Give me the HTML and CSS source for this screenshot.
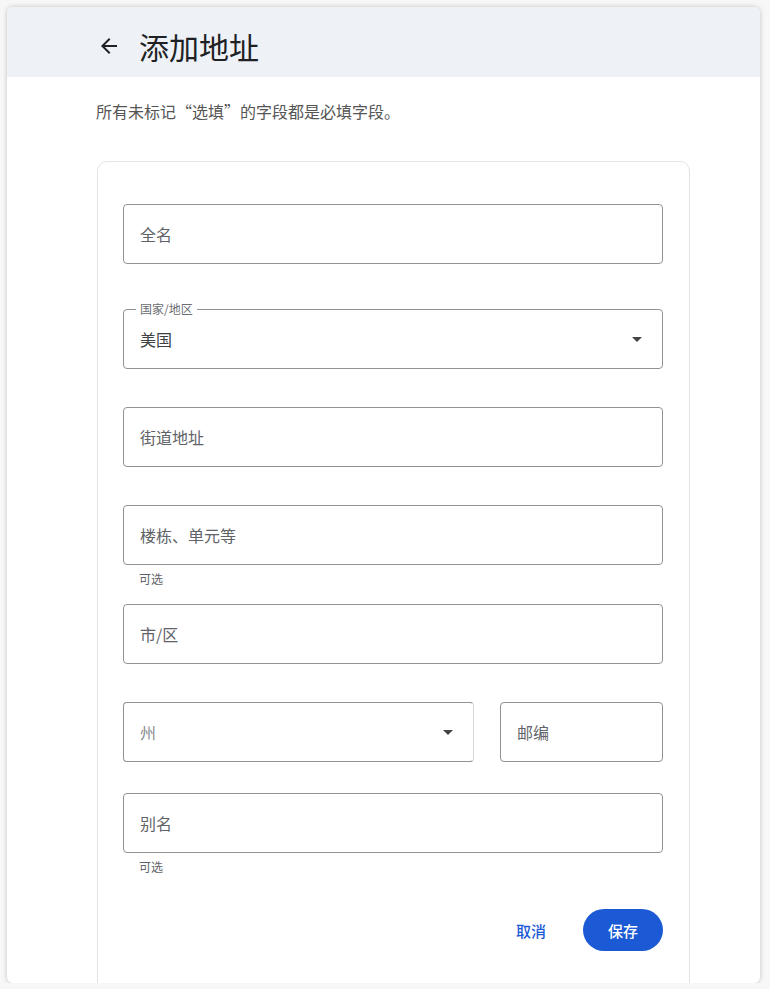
FILE: index.html
```
<!DOCTYPE html>
<html lang="zh-CN">
<head>
    <meta charset="UTF-8">
    <meta name="viewport" content="width=device-width, initial-scale=1.0">
    <title>添加地址</title>
    <link rel="stylesheet" href="styles.css">
</head>
<body>
    <div class="window">
        <!-- Header -->
        <header class="page-header">
            <button class="back-btn" aria-label="返回">
                <svg width="24" height="24" viewBox="0 0 24 24"><path d="M20 11H7.83l5.59-5.59L12 4l-8 8 8 8 1.41-1.41L7.83 13H20v-2z" fill="#202124"/></svg>
            </button>
            <h1>添加地址</h1>
        </header>

        <p class="note">所有未标记“选填”的字段都是必填字段。</p>

        <!-- Address form card -->
        <section class="card">
            <div class="form-row first">
                <div class="field"><span class="placeholder">全名</span></div>
            </div>

            <div class="form-row">
                <div class="field select">
                    <span class="float-label">国家/地区</span>
                    <span class="value">美国</span>
                    <span class="caret"></span>
                </div>
            </div>

            <div class="form-row">
                <div class="field"><span class="placeholder">街道地址</span></div>
            </div>

            <div class="form-row with-help">
                <div class="field"><span class="placeholder">楼栋、单元等</span></div>
                <div class="helper">可选</div>
            </div>

            <div class="form-row">
                <div class="field"><span class="placeholder">市/区</span></div>
            </div>

            <div class="form-row split">
                <div class="field select state">
                    <span class="placeholder light">州</span>
                    <span class="caret"></span>
                </div>
                <div class="field zip"><span class="placeholder">邮编</span></div>
            </div>

            <div class="form-row with-help last">
                <div class="field"><span class="placeholder">别名</span></div>
                <div class="helper">可选</div>
            </div>

            <div class="actions">
                <button class="btn-text">取消</button>
                <button class="btn-primary">保存</button>
            </div>
        </section>
    </div>
</body>
</html>
```

FILE: styles.css
```
* {
    margin: 0;
    padding: 0;
    box-sizing: border-box;
    font-family: "Noto Sans CJK SC", "Noto Sans", sans-serif;
}

body {
    background-color: #f7f7f7;
}

/* Window frame */
.window {
    margin: 7px 0 0 7px;
    width: 753px;
    height: 976px;
    background-color: #fff;
    border-radius: 6px;
    box-shadow: 0 0 5px rgba(0, 0, 0, 0.22);
    overflow: hidden;
}

/* Header */
.page-header {
    display: flex;
    align-items: center;
    height: 70px;
    padding: 8px 0 0 90px;
    background-color: #eef2f7;
}

.back-btn {
    display: flex;
    background: none;
    border: none;
    cursor: pointer;
    margin-right: 18px;
}

.page-header h1 {
    font-size: 30px;
    font-weight: 400;
    color: #202124;
    line-height: 40px;
}

.note {
    margin: 22px 0 0 89px;
    font-size: 16px;
    line-height: 24px;
    color: #555;
}

/* Card */
.card {
    margin: 38px 0 0 90px;
    width: 593px;
    border: 1px solid #e3e3e3;
    border-radius: 10px;
    padding: 42px 26px 60px 25px;
}

.form-row {
    margin-bottom: 38px;
}

.form-row.first {
    margin-bottom: 45px;
}

.form-row.with-help {
    margin-bottom: 17px;
}

.form-row.split {
    display: flex;
    gap: 26px;
    margin-bottom: 31px;
}

.form-row.last {
    margin-bottom: 34px;
}

.field {
    position: relative;
    display: flex;
    align-items: center;
    height: 60px;
    padding: 0 16px;
    border: 1px solid #8f9296;
    border-radius: 4px;
    font-size: 16px;
    color: #5f6368;
}

.field .value {
    color: #3c4043;
}

.field .light {
    color: #8a8d91;
}

.float-label {
    position: absolute;
    top: -9px;
    left: 12px;
    padding: 0 4px;
    background-color: #fff;
    font-size: 12px;
    line-height: 16px;
    color: #6b6e72;
}

.select .caret {
    position: absolute;
    right: 20px;
    top: 27px;
    border-left: 5px solid transparent;
    border-right: 5px solid transparent;
    border-top: 5px solid #444;
}

.state {
    width: 351px;
    border-right-color: #d5d7da;
}

.zip {
    flex: 1;
}

.helper {
    margin: 6px 0 0 16px;
    font-size: 12px;
    line-height: 16px;
    color: #5f6368;
}

/* Buttons */
.actions {
    display: flex;
    justify-content: flex-end;
    align-items: center;
    gap: 25px;
}

.btn-text {
    background: none;
    border: none;
    padding: 0 12px;
    font-size: 15px;
    font-weight: 500;
    color: #1b59d5;
    cursor: pointer;
}

.btn-primary {
    height: 42px;
    padding: 0 25px;
    border: none;
    border-radius: 21px;
    background-color: #1b59d5;
    color: #fff;
    font-size: 15px;
    font-weight: 500;
    cursor: pointer;
}
```
